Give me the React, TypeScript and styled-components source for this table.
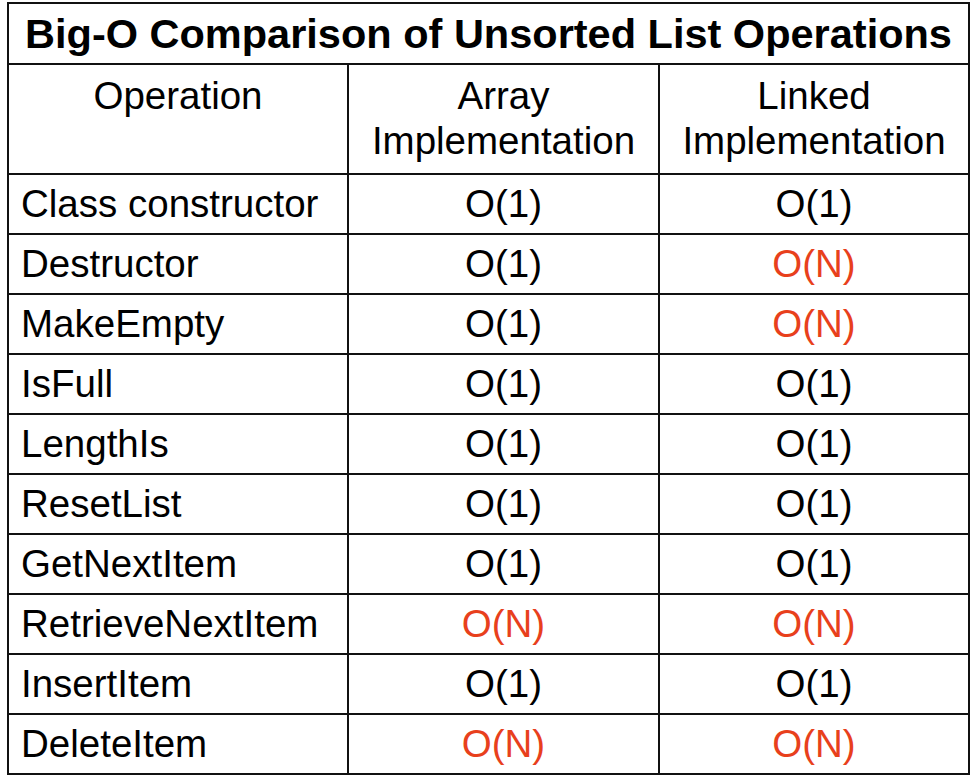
import React from 'react'
import styled, { createGlobalStyle } from 'styled-components'

const GlobalStyle = createGlobalStyle`
  html, body {
    margin: 0;
    padding: 0;
    background: #ffffff;
  }
  body {
    font-family: 'Liberation Sans', Arial, Helvetica, sans-serif;
    color: #000;
  }
`

const Page = styled.div`
  width: 980px;
  height: 783px;
  padding: 2px 0 0 7px;
  box-sizing: border-box;
`

const Table = styled.table`
  border-collapse: collapse;
  width: 961px;
  table-layout: fixed;
`

const TitleCell = styled.th`
  height: 59px;
  border: 2px solid #111;
  padding: 0;
  font-size: 41.5px;
  font-weight: bold;
  text-align: center;
  vertical-align: middle;
  line-height: 1;
  white-space: nowrap;
`

const HeadCell = styled.th`
  height: 100px;
  border: 2px solid #111;
  padding: 8px 4px 0;
  font-size: 38.5px;
  font-weight: normal;
  text-align: center;
  vertical-align: top;
  line-height: 45px;
`

const Cell = styled.td<{ $align?: 'left' | 'center'; $slow?: boolean }>`
  height: 58px;
  border: 2px solid #111;
  padding: 0 0 0 ${({ $align }) => ($align === 'left' ? '12px' : '0')};
  font-size: 38.5px;
  line-height: 1;
  text-align: ${({ $align }) => $align || 'center'};
  vertical-align: middle;
  color: ${({ $slow }) => ($slow ? '#e8401c' : '#000')};
  white-space: nowrap;
`

type Cost = 'O(1)' | 'O(N)'

interface Row {
  name: string
  array: Cost
  linked: Cost
}

const rows: Row[] = [
  { name: 'Class constructor', array: 'O(1)', linked: 'O(1)' },
  { name: 'Destructor', array: 'O(1)', linked: 'O(N)' },
  { name: 'MakeEmpty', array: 'O(1)', linked: 'O(N)' },
  { name: 'IsFull', array: 'O(1)', linked: 'O(1)' },
  { name: 'LengthIs', array: 'O(1)', linked: 'O(1)' },
  { name: 'ResetList', array: 'O(1)', linked: 'O(1)' },
  { name: 'GetNextItem', array: 'O(1)', linked: 'O(1)' },
  { name: 'RetrieveNextItem', array: 'O(N)', linked: 'O(N)' },
  { name: 'InsertItem', array: 'O(1)', linked: 'O(1)' },
  { name: 'DeleteItem', array: 'O(N)', linked: 'O(N)' },
]

export default function App() {
  return (
    <Page>
      <GlobalStyle />
      <Table>
        <colgroup>
          <col style={{ width: 340 }} />
          <col style={{ width: 311 }} />
          <col style={{ width: 310 }} />
        </colgroup>
        <thead>
          <tr>
            <TitleCell colSpan={3}>Big-O Comparison of Unsorted List Operations</TitleCell>
          </tr>
          <tr>
            <HeadCell>Operation</HeadCell>
            <HeadCell>
              Array
              <br />
              Implementation
            </HeadCell>
            <HeadCell>
              Linked
              <br />
              Implementation
            </HeadCell>
          </tr>
        </thead>
        <tbody>
          {rows.map((row) => (
            <tr key={row.name}>
              <Cell $align="left">{row.name}</Cell>
              <Cell $slow={row.array === 'O(N)'}>{row.array}</Cell>
              <Cell $slow={row.linked === 'O(N)'}>{row.linked}</Cell>
            </tr>
          ))}
        </tbody>
      </Table>
    </Page>
  )
}
